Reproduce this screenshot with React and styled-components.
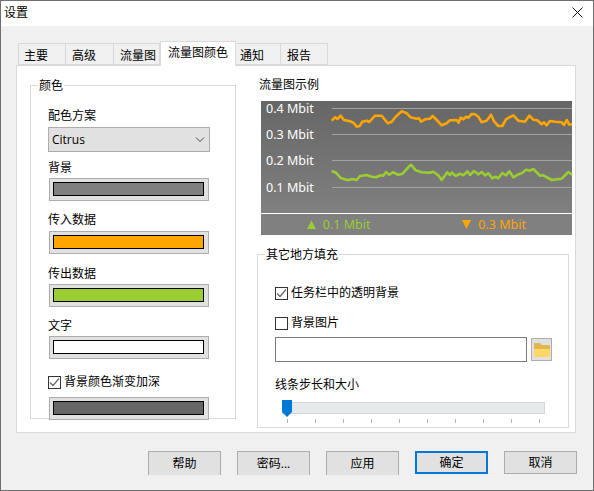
import React from 'react'
import styled, { createGlobalStyle } from 'styled-components';

const UI_FONT = `"Open Sans", "Noto Sans CJK SC", sans-serif`;

const GlobalStyle = createGlobalStyle`
html, body {
    margin : 0;
    padding : 0;
    overflow : hidden;
    background : #f0f0f0;
}
* {
    box-sizing : border-box;
}
`;

const Window = styled.div`
width : 594px;
height : 491px;
display : flex;
flex-direction : column;
border : 1px solid #6f6f6f;
background : #f0f0f0;
color : #000;
font-family : ${UI_FONT};
font-size : 12px;
line-height : 16px;
`;

const TitleBar = styled.div`
height : 25px;
flex : none;
background : #fff;
display : flex;
align-items : center;
justify-content : space-between;
padding : 0 10px 2px 3px;
`;

const TabRow = styled.div`
display : flex;
align-items : flex-end;
height : 24px;
margin-top : 15px;
padding-left : 17px;
flex : none;
position : relative;
z-index : 1;
`;

const Tab = styled.div`
width : ${({ $w }) => $w}px;
height : ${({ $active }) => ($active ? 25 : 22)}px;
margin-bottom : ${({ $active }) => ($active ? -1 : 0)}px;
padding : ${({ $active }) => ($active ? 3 : 4)}px 0 0 ${({ $pad }) => $pad}px;
background : ${({ $active }) => ($active ? '#fff' : '#f0f0f0')};
border : 1px solid #d9d9d9;
border-bottom : ${({ $active }) => ($active ? 'none' : '1px solid #d9d9d9')};
border-left : ${({ $noLeft }) => ($noLeft ? 'none' : '1px solid #d9d9d9')};
white-space : nowrap;
`;

const Panel = styled.div`
width : 560px;
height : 368px;
margin-left : 15px;
flex : none;
background : #fff;
border : 1px solid #d9d9d9;
display : flex;
align-items : flex-start;
`;

const ColorGroup = styled.div`
position : relative;
width : 206px;
height : 334px;
margin : 19px 0 0 13px;
padding : 21px 0 0 17px;
border : 1px solid #d9d9d9;
flex : none;
`;

const FillGroup = styled.div`
position : relative;
width : 312px;
height : 174px;
margin-top : 19px;
padding : 30px 0 0 17px;
border : 1px solid #d9d9d9;
`;

const Legend = styled.div`
position : absolute;
top : -8px;
left : 7px;
background : #fff;
padding : 0 1px;
`;

const FieldLabel = styled.div`
height : 16px;
line-height : 18px;
margin-top : ${({ $top }) => $top || 0}px;
`;

const Select = styled.div`
width : 162px;
height : 25px;
margin-top : 4px;
padding : 0 4px 0 3px;
display : flex;
align-items : center;
justify-content : space-between;
background : #e1e1e1;
border : 1px solid #adadad;
`;

const Swatch = styled.div`
width : 160px;
height : 23px;
margin : ${({ $top }) => $top}px 0 0 1px;
padding : 3px 4px 4px 3px;
background : #e1e1e1;
border : 1px solid #adadad;
position : relative;
`;

const SwatchFill = styled.div`
height : 14px;
background : ${({ $color }) => $color};
border : 1px solid #000;
`;

const CheckRow = styled.div`
display : flex;
align-items : center;
gap : 3px;
height : 16px;
margin-top : ${({ $top }) => $top || 0}px;
`;

const Box = styled.div`
width : 13px;
height : 13px;
flex : none;
background : #fff;
border : 1px solid #333;
display : flex;
align-items : center;
justify-content : center;
`;

const RightColumn = styled.div`
width : 315px;
margin : 11px 0 0 21px;
flex : none;
`;

const ChartTitle = styled.div`
height : 16px;
padding-left : 2px;
`;

const Chart = styled.div`
width : 311px;
margin : 8px 0 0 4px;
background : #808080;
`;

const Plot = styled.svg`
display : block;
width : 311px;
height : 112px;
overflow : visible;
`;

const ChartLegend = styled.div`
height : 22px;
border-top : 1px solid #fff;
background : #808080;
display : flex;
align-items : center;
justify-content : space-around;
font-family : "Noto Sans", sans-serif;
font-size : 12.5px;
`;

const Stat = styled.div`
width : 64px;
display : flex;
align-items : center;
gap : 7px;
white-space : nowrap;
color : ${({ $color }) => $color};
`;

const PathRow = styled.div`
display : flex;
align-items : center;
gap : 4px;
margin-top : 6px;
`;

const PathInput = styled.div`
width : 252px;
height : 25px;
background : #fff;
border : 1px solid #7a7a7a;
`;

const FolderButton = styled.div`
width : 21px;
height : 23px;
background : #e1e1e1;
border : 1px solid #adadad;
display : flex;
align-items : center;
justify-content : center;
`;

const Slider = styled.div`
position : relative;
width : 263px;
margin : 8px 0 0 7px;
padding-top : 2px;
`;

const Track = styled.div`
height : 12px;
background : #e7eaea;
border : 1px solid #d6d6d6;
`;

const Thumb = styled.svg`
position : absolute;
top : 0;
left : 0;
`;

const Ticks = styled.div`
display : flex;
justify-content : space-between;
margin-top : 5px;
padding : 0 5px 0 5px;
`;

const Tick = styled.div`
width : 1px;
height : 4px;
background : #b4b4b4;
`;

const Footer = styled.div`
display : flex;
justify-content : flex-end;
gap : 16px;
margin-top : 18px;
padding-right : 16px;
`;

const Button = styled.div`
width : 73px;
height : ${({ $cut }) => ($cut ? 24 : 23)}px;
background : #e1e1e1;
border : ${({ $primary }) => ($primary ? '2px solid #0078d7' : '1px solid #adadad')};
border-bottom : ${({ $cut }) => ($cut ? 'none' : '')};
display : flex;
align-items : center;
justify-content : center;
`;

const AxisText = styled.text`
fill : #fff;
font-family : "Noto Sans", sans-serif;
font-size : 12.5px;
`;

// points read off the reference at 3x zoom
const inPoints = [[245,152],[255,142],[262,147],[272,137],[282,150],[300,154],[310,158],[320,170],[330,167],[337,155],[350,152],[358,156],[375,137],[395,137],[413,160],[425,155],[437,140],[455,124],[470,130],[482,142],[500,146],[507,145],[513,155],[525,148],[540,146],[548,138],[560,150],[575,166],[590,160],[600,151],[620,150],[626,158],[632,143],[640,148],[648,140],[655,143],[665,132],[675,133],[685,140],[695,157],[710,152],[723,134],[733,155],[745,168],[757,168],[768,148],[778,142],[790,136],[805,152],[825,155],[838,137],[850,149],[862,151],[875,163],[882,157],[890,166],[900,153],[915,155],[935,157],[942,165],[950,150],[958,164],[966,163]];
const outPoints = [[245,303],[258,308],[272,324],[295,331],[305,327],[320,330],[330,318],[350,315],[365,320],[378,322],[392,316],[400,317],[408,306],[418,314],[428,307],[445,314],[458,311],[470,297],[483,284],[497,301],[515,307],[540,308],[550,305],[565,316],[575,330],[592,307],[600,315],[606,308],[617,318],[630,311],[640,316],[652,304],[660,315],[672,303],[685,313],[695,306],[705,316],[715,310],[727,325],[737,320],[745,325],[757,309],[768,316],[778,304],[790,322],[805,313],[815,310],[828,299],[840,302],[850,297],[870,317],[880,316],[905,330],[935,326],[955,306],[966,314]];

const toLine = (pts) => pts.map(([x, y]) => `${(x / 3 - 11).toFixed(1)},${(y / 3 - 31).toFixed(1)}`).join(' ');

const gridLines = [
    { y : 7.5, label : '0.4 Mbit', base : 12 },
    { y : 33.5, label : '0.3 Mbit', base : 38 },
    { y : 59.5, label : '0.2 Mbit', base : 64 },
    { y : 86.5, label : '0.1 Mbit', base : 91 },
];

const CheckMark = () => (
    <svg width="11" height="11" viewBox="0 0 11 11">
        <path d="M1 5.5 L4 8.5 L10 1.5" fill="none" stroke="#666" strokeWidth="1.2" />
    </svg>
);

const Check = ({ checked, top, children }) => (
    <CheckRow $top={top}>
        <Box>{checked && <CheckMark />}</Box>
        <span>{children}</span>
    </CheckRow>
);

function TrafficChart() {
    return (
        <Chart>
            <Plot viewBox="0 0 311 112">
                <defs>
                    <linearGradient id="plotBg" x1="0" y1="0" x2="0" y2="1">
                        <stop offset="0" stopColor="#666666" />
                        <stop offset="1" stopColor="#808080" />
                    </linearGradient>
                </defs>
                <rect width="311" height="112" fill="url(#plotBg)" />
                {gridLines.map((line) => (
                    <g key={line.label}>
                        <line x1="71" x2="311" y1={line.y} y2={line.y} stroke="#a3a3a3" strokeWidth="1" />
                        <AxisText x="5" y={line.base}>{line.label}</AxisText>
                    </g>
                ))}
                <polyline points={toLine(inPoints)} fill="none" stroke="#ffa500" strokeWidth="2.6" strokeLinejoin="round" />
                <polyline points={toLine(outPoints)} fill="none" stroke="#9acd32" strokeWidth="2.6" strokeLinejoin="round" />
            </Plot>
            <ChartLegend>
                <Stat $color="#9acd32">
                    <svg width="9" height="9" viewBox="0 0 9 9"><path d="M4.5 0.5 L9 9 H0 Z" fill="#9acd32" /></svg>
                    0.1 Mbit
                </Stat>
                <Stat $color="#ffa500">
                    <svg width="9" height="9" viewBox="0 0 9 9"><path d="M0 0 H9 L4.5 9 Z" fill="#ffa500" /></svg>
                    0.3 Mbit
                </Stat>
            </ChartLegend>
        </Chart>
    )
}

function App() {
    return (
        <Window>
            <GlobalStyle />
            <TitleBar>
                <span>设置</span>
                <svg width="11" height="11" viewBox="0 0 11 11">
                    <path d="M0.5 0.5 L10.5 10.5 M10.5 0.5 L0.5 10.5" stroke="#111" strokeWidth="1" />
                </svg>
            </TitleBar>

            <TabRow>
                <Tab $w={48} $pad={5}>主要</Tab>
                <Tab $w={48} $pad={6} $noLeft>高级</Tab>
                <Tab $w={46} $pad={6} $noLeft>流量图</Tab>
                <Tab $w={76} $pad={7} $active>流量图颜色</Tab>
                <Tab $w={45} $pad={4} $noLeft>通知</Tab>
                <Tab $w={47} $pad={6} $noLeft>报告</Tab>
            </TabRow>

            <Panel>
                <ColorGroup>
                    <Legend>颜色</Legend>
                    <FieldLabel>配色方案</FieldLabel>
                    <Select>
                        <span>Citrus</span>
                        <svg width="10" height="6" viewBox="0 0 10 6">
                            <path d="M1 0.5 L5 4.5 L9 0.5" fill="none" stroke="#444" strokeWidth="1" />
                        </svg>
                    </Select>
                    <FieldLabel $top={7}>背景</FieldLabel>
                    <Swatch $top={3}><SwatchFill $color="#808080" /></Swatch>
                    <FieldLabel $top={10}>传入数据</FieldLabel>
                    <Swatch $top={4}><SwatchFill $color="#ffa500" /></Swatch>
                    <FieldLabel $top={11}>传出数据</FieldLabel>
                    <Swatch $top={3}><SwatchFill $color="#9acd32" /></Swatch>
                    <FieldLabel $top={10}>文字</FieldLabel>
                    <Swatch $top={3}><SwatchFill $color="#ffffff" /></Swatch>
                    <Check checked top={15}>背景颜色渐变加深</Check>
                    <Swatch $top={7}><SwatchFill $color="#666666" /></Swatch>
                </ColorGroup>

                <RightColumn>
                    <ChartTitle>流量图示例</ChartTitle>
                    <TrafficChart />

                    <FillGroup>
                        <Legend>其它地方填充</Legend>
                        <Check checked>任务栏中的透明背景</Check>
                        <Check top={14}>背景图片</Check>
                        <PathRow>
                            <PathInput />
                            <FolderButton>
                                <svg width="16" height="14" viewBox="0 0 16 14">
                                    <path d="M0 1 Q0 0 1 0 H6 L8 2 H15 Q16 2 16 3 V7 H0 Z" fill="#dfb650" />
                                    <path d="M0 6 H16 V13 Q16 14 15 14 H1 Q0 14 0 13 Z" fill="#fdd868" />
                                </svg>
                            </FolderButton>
                        </PathRow>
                        <FieldLabel $top={14}>线条步长和大小</FieldLabel>
                        <Slider>
                            <Track />
                            <Thumb width="10" height="17" viewBox="0 0 10 17">
                                <path d="M0 0 H10 V12 L5 17 L0 12 Z" fill="#0078d7" />
                            </Thumb>
                            <Ticks>
                                {Array.from({ length : 10 }, (_, i) => <Tick key={i} />)}
                            </Ticks>
                        </Slider>
                    </FillGroup>
                </RightColumn>
            </Panel>

            <Footer>
                <Button $cut>帮助</Button>
                <Button $cut>密码...</Button>
                <Button $cut>应用</Button>
                <Button $primary>确定</Button>
                <Button>取消</Button>
            </Footer>
        </Window>
    )
}

export default App;
